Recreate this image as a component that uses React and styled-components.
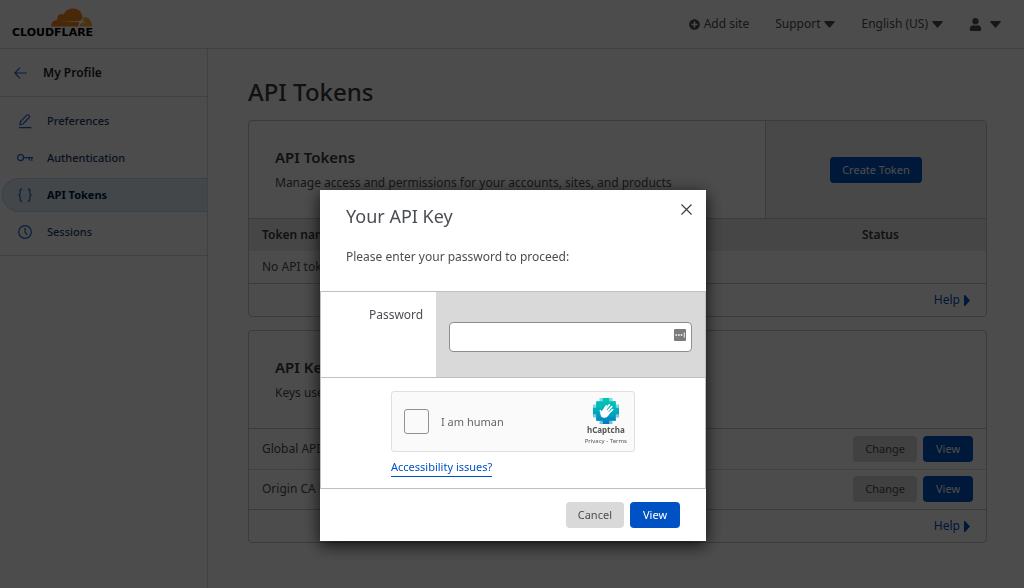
import styled, { createGlobalStyle } from "styled-components";
import { FaPlusCircle, FaUser } from "react-icons/fa";

const navItems = [
  { label: "Preferences", icon: <PencilIcon /> },
  { label: "Authentication", icon: <KeyIcon /> },
  { label: "API Tokens", icon: <BracesIcon />, active: true },
  { label: "Sessions", icon: <ClockIcon /> },
];

const apiKeys = ["Global API Key", "Origin CA Key"];

export default function App() {
  return (
    <>
      <GlobalStyle />
      <Page>
        <TopBar />
        <Body>
          <Sidebar />
          <Main>
            <Title>API Tokens</Title>
            <TokensCard />
            <KeysCard />
          </Main>
        </Body>
      </Page>
      <Overlay>
        <PasswordModal />
      </Overlay>
    </>
  );
}

function TopBar() {
  return (
    <Header>
      <Logo href="#">
        <CloudIcon />
        <LogoText>CLOUDFLARE</LogoText>
      </Logo>
      <Menu>
        <MenuButton>
          <FaPlusCircle size={11} />
          Add site
        </MenuButton>
        <MenuButton>
          Support
          <CaretDown />
        </MenuButton>
        <MenuButton>
          English (US)
          <CaretDown />
        </MenuButton>
        <MenuButton $gap="8px" aria-label="Account">
          <FaUser size={13} />
          <CaretDown />
        </MenuButton>
      </Menu>
    </Header>
  );
}

function Sidebar() {
  return (
    <Aside>
      <BackLink href="#">
        <BackIcon />
        My Profile
      </BackLink>
      <Nav>
        {navItems.map((item) => (
          <NavLink key={item.label} href="#" $active={item.active}>
            {item.icon}
            {item.label}
          </NavLink>
        ))}
      </Nav>
    </Aside>
  );
}

function TokensCard() {
  return (
    <Card>
      <CardHeader>
        <CardIntro>
          <CardTitle>API Tokens</CardTitle>
          <CardText>
            Manage access and permissions for your accounts, sites, and products
          </CardText>
        </CardIntro>
        <CardAction>
          <Button $primary>Create Token</Button>
        </CardAction>
      </CardHeader>
      <Table>
        <thead>
          <tr>
            <Th>Token name</Th>
            <Th $width="137px">Status</Th>
          </tr>
        </thead>
        <tbody>
          <tr>
            <Td>No API tokens</Td>
            <Td />
          </tr>
        </tbody>
      </Table>
      <CardFooter>
        <HelpLink href="#">
          Help
          <CaretRight />
        </HelpLink>
      </CardFooter>
    </Card>
  );
}

function KeysCard() {
  return (
    <Card>
      <CardHeader>
        <CardIntro>
          <CardTitle>API Keys</CardTitle>
          <CardText>Keys used to access Cloudflare APIs.</CardText>
        </CardIntro>
      </CardHeader>
      <Table>
        <tbody>
          {apiKeys.map((name) => (
            <KeyRow key={name}>
              <Td>{name}</Td>
              <Td>
                <RowActions>
                  <Button>Change</Button>
                  <Button $primary>View</Button>
                </RowActions>
              </Td>
            </KeyRow>
          ))}
        </tbody>
      </Table>
      <CardFooter>
        <HelpLink href="#">
          Help
          <CaretRight />
        </HelpLink>
      </CardFooter>
    </Card>
  );
}

function PasswordModal() {
  return (
    <Modal role="dialog" aria-labelledby="modal-title">
      <ModalHeader>
        <ModalTitleRow>
          <ModalTitle id="modal-title">Your API Key</ModalTitle>
          <CloseButton aria-label="Close">
            <CloseIcon />
          </CloseButton>
        </ModalTitleRow>
        <ModalText>Please enter your password to proceed:</ModalText>
      </ModalHeader>
      <FormRow>
        <FormLabel htmlFor="password">Password</FormLabel>
        <FormField>
          <InputBox>
            <PasswordInput id="password" type="password" />
            <ManagerIcon />
          </InputBox>
        </FormField>
      </FormRow>
      <CaptchaRow>
        <Captcha>
          <HumanCheck id="human" type="checkbox" />
          <HumanLabel htmlFor="human">I am human</HumanLabel>
          <CaptchaBrand>
            <HandIcon />
            <CaptchaName>hCaptcha</CaptchaName>
            <CaptchaLinks>
              <a href="#">Privacy</a> - <a href="#">Terms</a>
            </CaptchaLinks>
          </CaptchaBrand>
        </Captcha>
        <IssuesLink href="#">Accessibility issues?</IssuesLink>
      </CaptchaRow>
      <ModalFooter>
        <Button>Cancel</Button>
        <Button $primary>View</Button>
      </ModalFooter>
    </Modal>
  );
}

// Icons
function CloudIcon() {
  return (
    <svg width="42" height="19" viewBox="0 0 42 19">
      <path
        fill="#f6821f"
        d="M0 18.4C0 14.6 2.6 12 6.3 11.9C5.5 8 9.2 4.7 12.6 6.6C14.3 2.6 17.8.4 22 .4C28 .4 31.3 4.7 31.6 9.6C31.2 11.8 29.8 12.6 28 13L8.8 13.4L27.5 14C28.8 14.6 27.6 16.8 27 18.4Z"
      />
      <path
        fill="#fbad41"
        d="M32.8 9C37.6 8.6 41.4 13 41 18.4H28.6C29 16.8 29.4 15.6 31 14.8L35 14.2L32 13.2C31.6 11.6 32.2 10.2 32.8 9Z"
      />
    </svg>
  );
}

function CaretDown() {
  return (
    <svg width="11" height="7" viewBox="0 0 11 7" fill="currentColor">
      <path d="M.6 0H10.4Q11 .3 10.7 1L6.2 6.3Q5.5 7 4.8 6.3L.3 1Q0 .3.6 0Z" />
    </svg>
  );
}

function CaretRight() {
  return (
    <svg width="6" height="11" viewBox="0 0 6 11" fill="currentColor">
      <path d="M0 0H1L6 5.5L1 11H0Z" />
    </svg>
  );
}

function BackIcon() {
  return (
    <svg width="13" height="12" viewBox="0 0 13 12" fill="none" stroke="#1f62cc" strokeWidth="1.2">
      <path d="M6 .7L.9 6L6 11.3M.9 6H13" />
    </svg>
  );
}

function PencilIcon() {
  return (
    <svg width="16" height="16" viewBox="0 0 16 16" fill="none" stroke="#1f62cc" strokeWidth="1.2">
      <path d="M2 14.6H14.4M2.8 11.8L3.5 8.6L9.8 2.1Q10.9 1.3 12 2.3Q13.1 3.4 12.2 4.5L5.9 11Z" />
    </svg>
  );
}

function KeyIcon() {
  return (
    <svg width="16" height="16" viewBox="0 0 16 16" fill="none" stroke="#1f62cc" strokeWidth="1.2">
      <circle cx="3.6" cy="7.6" r="3" />
      <path d="M6.6 7.6H16M12.2 7.6V10.6M14.8 7.6V11" />
    </svg>
  );
}

function BracesIcon() {
  return (
    <svg width="16" height="16" viewBox="0 0 16 16" fill="none" stroke="#1f62cc" strokeWidth="1.2">
      <path d="M5.2 1.8Q3.2 1.8 3.2 3.6V5.8Q3.2 7.8 1.4 8Q3.2 8.2 3.2 10.2V12.4Q3.2 14.2 5.2 14.2" />
      <path d="M10.8 1.8Q12.8 1.8 12.8 3.6V5.8Q12.8 7.8 14.6 8Q12.8 8.2 12.8 10.2V12.4Q12.8 14.2 10.8 14.2" />
    </svg>
  );
}

function ClockIcon() {
  return (
    <svg width="16" height="16" viewBox="0 0 16 16" fill="none" stroke="#1f62cc" strokeWidth="1.2">
      <circle cx="8" cy="8" r="6.3" />
      <path d="M8 3.8V8L10.2 11" />
    </svg>
  );
}

function CloseIcon() {
  return (
    <svg width="11" height="11" viewBox="0 0 11 11" stroke="#36393f" strokeWidth="1.1">
      <path d="M.5.5L10.5 10.5M10.5.5L.5 10.5" />
    </svg>
  );
}

function ManagerIcon() {
  return (
    <svg width="12" height="12" viewBox="0 0 12 12">
      <rect width="12" height="12" rx="1" fill="#7b7b7b" />
      <path d="M1.5 5.2h1.6v1.6H1.5zM4.1 5.2h1.6v1.6H4.1zM6.7 5.2h1.6v1.6H6.7zM9.8 3.4h.9v5.2h-.9z" fill="#fff" />
    </svg>
  );
}

function HandIcon() {
  return (
    <svg width="26" height="26" viewBox="0 0 26 26">
      <defs>
        <linearGradient id="hand-bg" x1="0" y1="0" x2="0" y2="1">
          <stop offset="0" stopColor="#00c9b7" />
          <stop offset="0.5" stopColor="#00adbc" />
          <stop offset="1" stopColor="#0078bf" />
        </linearGradient>
      </defs>
      <g fill="url(#hand-bg)">
        <path opacity=".5" d="M6.5 0H19.5V3.2H22.8V6.5H26V19.5H22.8V22.8H19.5V26H6.5V22.8H3.2V19.5H0V6.5H3.2V3.2H6.5Z" />
        <path d="M9.8 0H16.2V3.2H22.8V9.8H26V16.2H22.8V22.8H16.2V26H9.8V22.8H3.2V16.2H0V9.8H3.2V3.2H9.8Z" />
      </g>
      <path
        d="M9.6 13.5L13.4 7.8M11.8 12.8L16.4 6.8M13.8 14L18.7 8.6M15.5 15.4L19.6 11.6M8.6 16.5L7.4 12.6"
        stroke="#fff"
        strokeWidth="1.7"
        strokeLinecap="round"
      />
      <path d="M8.8 13L14 11.8L16.8 15.2C15.5 18 13.6 20.2 10.8 19.8C7.9 19.4 7.3 17 7.8 15Z" fill="#fff" />
    </svg>
  );
}

// Styled components
const GlobalStyle = createGlobalStyle`
  * {
    box-sizing: border-box;
  }

  body {
    margin: 0;
    color: #4a4d53;
    background: #fff;
    font-family: "Noto Sans", "Open Sans", sans-serif;
    font-size: 12px;
    line-height: 20px;
  }

  button,
  input {
    font: inherit;
    color: inherit;
  }

  a {
    color: inherit;
    text-decoration: none;
  }

  svg {
    display: block;
    flex: none;
  }
`;

const Page = styled.div`
  display: flex;
  flex-direction: column;
  min-height: 100vh;
`;

const Header = styled.header`
  display: flex;
  align-items: center;
  justify-content: space-between;
  height: 49px;
  padding: 0 23px 0 12px;
  border-bottom: 1px solid #d9d9d9;
`;

const Logo = styled.a`
  display: flex;
  flex-direction: column;
  align-items: flex-end;
  padding-bottom: 2px;
`;

const LogoText = styled.span`
  font-family: "DejaVu Sans", sans-serif;
  font-size: 11px;
  font-weight: 700;
  line-height: 12px;
  color: #000;
`;

const Menu = styled.nav`
  display: flex;
  gap: 26px;
`;

const MenuButton = styled.button`
  display: flex;
  align-items: center;
  gap: ${({ $gap }) => $gap || "4px"};
  padding: 0;
  border: 0;
  background: none;
`;

const Body = styled.div`
  display: flex;
  flex: 1;
`;

const Aside = styled.aside`
  flex: none;
  width: 208px;
  border-right: 1px solid #d9d9d9;
`;

const BackLink = styled.a`
  display: flex;
  align-items: center;
  gap: 16px;
  height: 48px;
  padding-left: 14px;
  border-bottom: 1px solid #d9d9d9;
  font-size: 12px;
  font-weight: 600;
  color: #1d1f20;
`;

const Nav = styled.nav`
  display: flex;
  flex-direction: column;
  gap: 3px;
  padding: 7px 0 6px 2px;
  border-bottom: 1px solid #d9d9d9;
`;

const NavLink = styled.a`
  display: flex;
  align-items: center;
  gap: 14px;
  height: 34px;
  padding-left: 14px;
  border: 1px solid ${({ $active }) => ($active ? "#b9d6ff" : "transparent")};
  border-right: 0;
  border-radius: 17px 0 0 17px;
  background: ${({ $active }) => ($active ? "#dfedf8" : "none")};
  color: ${({ $active }) => ($active ? "#001c43" : "#1d3a6b")};
  font-size: 11px;
  font-weight: ${({ $active }) => ($active ? 700 : 500)};
`;

const Main = styled.main`
  flex: 1;
  min-width: 0;
  padding: 25px 37px 24px 40px;
`;

const Title = styled.h1`
  margin: 0 0 10px;
  color: #36393f;
  font-size: 24px;
  font-weight: 500;
  line-height: 36px;
`;

const Card = styled.section`
  margin-bottom: 13px;
  border: 1px solid #c5c5c5;
  border-radius: 4px;
  overflow: hidden;
`;

const CardHeader = styled.div`
  display: flex;
  border-bottom: 1px solid #c5c5c5;
`;

const CardIntro = styled.div`
  flex: 1;
  padding: 25px 26px;
`;

const CardTitle = styled.h2`
  margin: 0 0 5px;
  color: #36393f;
  font-size: 15px;
  font-weight: 600;
  line-height: 22px;
`;

const CardText = styled.p`
  margin: 0;
`;

const CardAction = styled.div`
  display: flex;
  flex: none;
  align-items: center;
  justify-content: center;
  width: 30%;
  border-left: 1px solid #c5c5c5;
  background: #f0f0f0;
`;

const Table = styled.table`
  width: 100%;
  border-collapse: collapse;
`;

const Th = styled.th`
  width: ${({ $width }) => $width || "auto"};
  padding: 6px 13px;
  background: #ebebeb;
  color: #36393f;
  font-weight: 600;
  text-align: left;
`;

const Td = styled.td`
  height: 32px;
  padding: 6px 13px;
`;

const KeyRow = styled.tr`
  height: 40px;

  &:not(:last-child) {
    border-bottom: 1px solid #d9d9d9;
  }
`;

const RowActions = styled.div`
  display: flex;
  justify-content: flex-end;
  gap: 6px;
`;

const CardFooter = styled.div`
  display: flex;
  justify-content: flex-end;
  padding: 6px 16px;
  border-top: 1px solid #c5c5c5;
`;

const HelpLink = styled.a`
  display: flex;
  align-items: center;
  gap: 4px;
  color: #0051c3;
`;

const Button = styled.button`
  min-width: 50px;
  height: 26px;
  padding: 0 12px;
  border: 0;
  border-radius: 4px;
  background: ${({ $primary }) => ($primary ? "#0051c3" : "#d9d9d9")};
  color: ${({ $primary }) => ($primary ? "#fff" : "#4a4d53")};
  font-size: 11px;
  cursor: pointer;
`;

const Overlay = styled.div`
  position: fixed;
  inset: 0;
  display: flex;
  align-items: flex-start;
  justify-content: center;
  padding: 190px 0 0 2px;
  background: rgba(0, 0, 0, 0.7);
`;

const Modal = styled.div`
  width: 386px;
  background: #fff;
  box-shadow: 0 4px 16px rgba(0, 0, 0, 0.8);
`;

const ModalHeader = styled.div`
  padding: 12px 14px 24px 26px;
`;

const ModalTitleRow = styled.div`
  display: flex;
  align-items: flex-start;
  justify-content: space-between;
  margin-bottom: 17px;
`;

const ModalTitle = styled.h2`
  margin: 0;
  font-size: 18px;
  font-weight: 400;
  line-height: 28px;
`;

const CloseButton = styled.button`
  padding: 2px 0;
  border: 0;
  background: none;
  cursor: pointer;
`;

const ModalText = styled.p`
  margin: 0;
`;

const FormRow = styled.div`
  display: flex;
  border: 1px solid #c0c0c0;
`;

const FormLabel = styled.label`
  flex: none;
  width: 30%;
  padding: 13px;
  text-align: right;
`;

const FormField = styled.div`
  flex: 1;
  padding: 30px 13px 25px;
  background: #d9d9d9;
`;

const InputBox = styled.div`
  display: flex;
  align-items: center;
  height: 30px;
  padding: 0 5px 4px 0;
  border: 1px solid #8e8e8e;
  border-radius: 4px;
  background: #fff;
`;

const PasswordInput = styled.input`
  flex: 1;
  min-width: 0;
  padding: 0 8px;
  border: 0;
  outline: 0;
  background: none;
`;

const CaptchaRow = styled.div`
  padding: 13px 70px 11px;
  border: 1px solid #c0c0c0;
  border-top: 0;
`;

const Captcha = styled.div`
  display: flex;
  align-items: center;
  height: 61px;
  margin-bottom: 5px;
  padding: 0 7px 0 12px;
  border: 1px solid #e0e0e0;
  border-radius: 3px;
  background: #fafafa;
`;

const HumanCheck = styled.input`
  appearance: none;
  width: 25px;
  height: 25px;
  margin: 0 12px 0 0;
  border: 1px solid #919191;
  border-radius: 3px;
  background: #fafafa;
`;

const HumanLabel = styled.label`
  flex: 1;
  color: #666;
  font-size: 11px;
`;

const CaptchaBrand = styled.div`
  display: flex;
  flex-direction: column;
  align-items: center;
  color: #555;
`;

const CaptchaName = styled.span`
  font-size: 8px;
  font-weight: 700;
  line-height: 12px;
`;

const CaptchaLinks = styled.span`
  font-size: 6px;
  line-height: 10px;
`;

const IssuesLink = styled.a`
  display: inline-block;
  border-bottom: 1px solid #0051c3;
  color: #0051c3;
  font-size: 11px;
  line-height: 18px;
`;

const ModalFooter = styled.div`
  display: flex;
  justify-content: flex-end;
  gap: 6px;
  padding: 13px 26px;
`;
